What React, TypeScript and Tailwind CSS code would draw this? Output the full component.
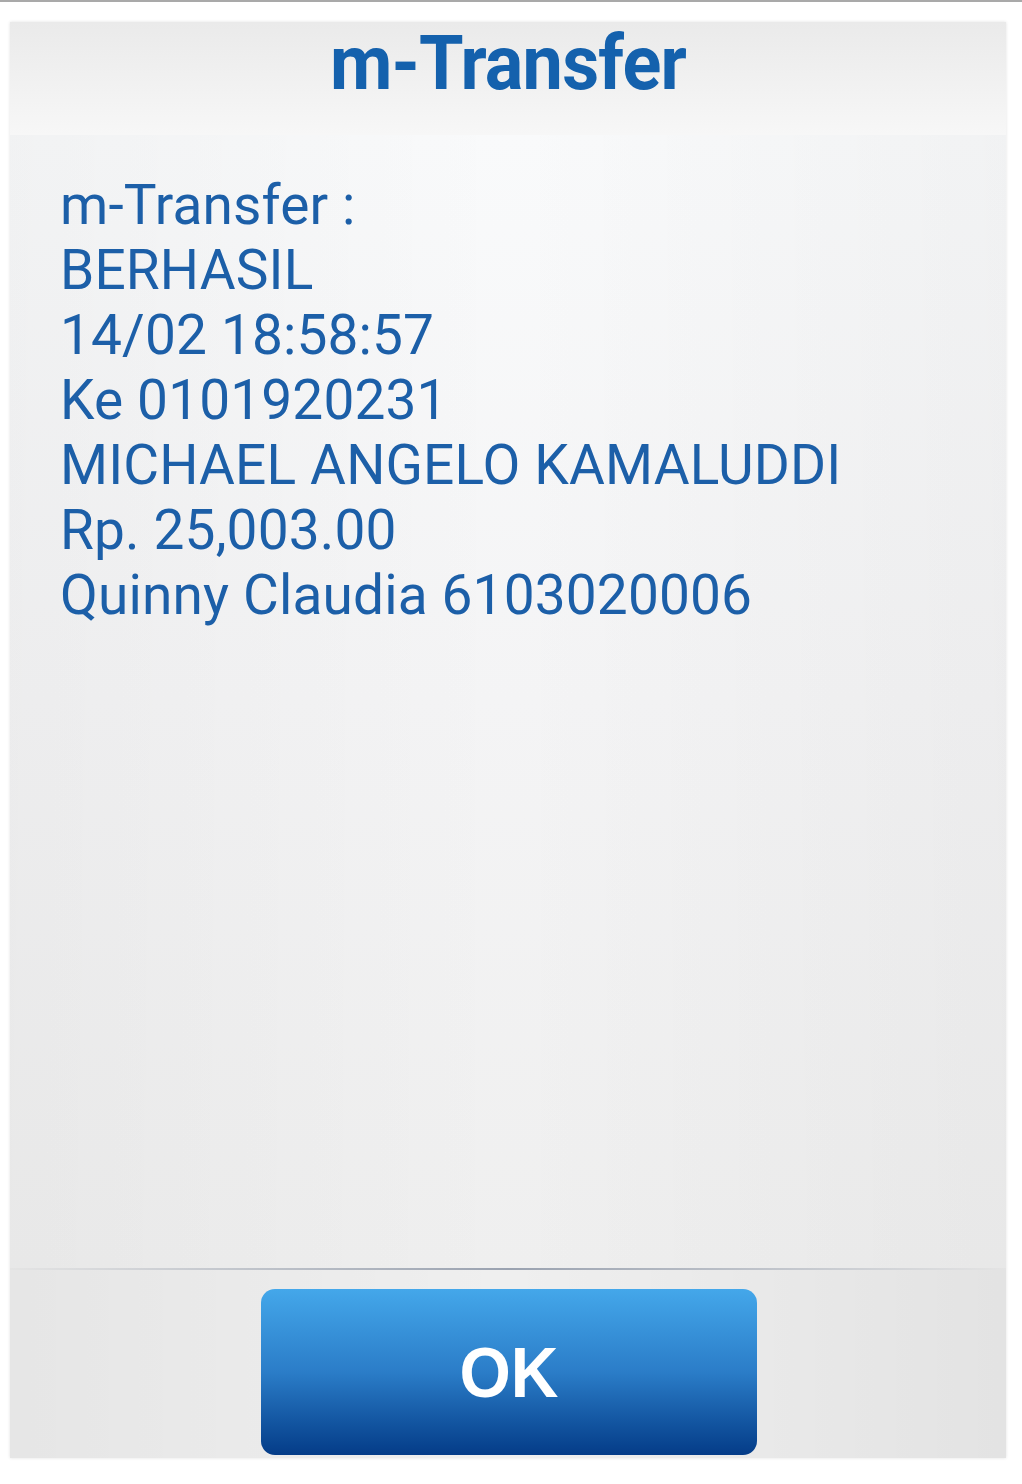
import React from "react";

export default function App() {
  const lines = [
    "m-Transfer :",
    "BERHASIL",
    "14/02 18:58:57",
    "Ke 0101920231",
    "MICHAEL ANGELO KAMALUDDI",
    "Rp. 25,003.00",
    "Quinny Claudia 6103020006",
  ];
  return (
    <div className="w-[1022px] h-[1484px] bg-white flex flex-col">
      <div className="h-[2px] bg-[#a9a9a9]" />
      <div className="flex-1 pt-[20px] pl-[10px] pr-[16px] pb-[26px]">
        <div className="h-full flex flex-col bg-[#eeeeee] shadow-[0_0_3px_rgba(0,0,0,0.12)]">
          <div className="h-[113px] flex justify-center bg-gradient-to-b from-[#eaeaea] to-[#f7f7f7]">
            <h1
              className="text-[#1461ad] font-bold text-[72px] leading-none mt-[4px] tracking-[-0.8px] scale-y-[1.05] origin-top"
              style={{ fontFamily: "Roboto, 'Liberation Sans', sans-serif" }}
            >
              m-Transfer
            </h1>
          </div>
          <div className="flex-1 relative bg-gradient-to-b from-[#f9fafb] via-[#f4f4f5] to-[#efefef]">
            <div className="absolute inset-0 bg-gradient-to-r from-[rgba(0,0,0,0.03)] via-transparent to-[rgba(0,0,0,0.03)]" />
            <div
              className="relative pl-[50px] pt-[38px] text-[#1c5fa8] text-[55px] leading-[65px] tracking-[0.15px]"
              style={{ fontFamily: "Roboto, 'Liberation Sans', sans-serif" }}
            >
              {lines.map((l) => (
                <div key={l}>{l}</div>
              ))}
            </div>
          </div>
          <div className="h-[2px] bg-gradient-to-r from-[#e4e4e4] via-[#9aa2b0] to-[#e4e4e4]" />
          <div className="h-[188px] relative flex justify-center pt-[19px] bg-[#efefef]">
            <div className="absolute inset-0 bg-gradient-to-r from-[rgba(0,0,0,0.04)] via-transparent to-[rgba(0,0,0,0.05)]" />
            <button className="relative ml-[2px] w-[496px] h-[166px] rounded-[14px] bg-gradient-to-b from-[#44a7ea] via-[#2b7dc8] to-[#053c88] flex items-center justify-center">
              <span
                className="text-white font-bold text-[66px] leading-none scale-y-[1.08]"
                style={{ fontFamily: "'Liberation Sans', Arial, sans-serif" }}
              >
                OK
              </span>
            </button>
          </div>
        </div>
      </div>
    </div>
  );
}
